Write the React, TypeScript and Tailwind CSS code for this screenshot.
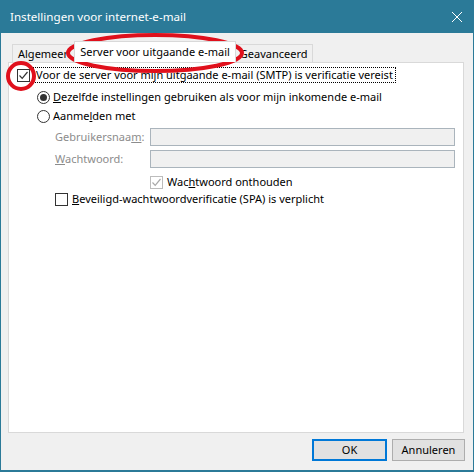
import React from "react";

const font = { fontFamily: '"Noto Sans", "Segoe UI", sans-serif' };

function Check({ checked, disabled }: { checked?: boolean; disabled?: boolean }) {
  return (
    <span
      className={`flex h-[13px] w-[13px] shrink-0 items-center justify-center border bg-white ${
        disabled ? "border-[#bcbcbc]" : "border-[#333333]"
      }`}
    >
      {checked && (
        <svg width="11" height="11" viewBox="0 0 11 11">
          <path d="M1.5 5.5 L4.2 8.3 L9.5 2" fill="none" stroke={disabled ? "#a8a8a8" : "#333333"} strokeWidth="1.2" />
        </svg>
      )}
    </span>
  );
}

function Radio({ checked }: { checked?: boolean }) {
  return (
    <span className="flex h-[13px] w-[13px] shrink-0 items-center justify-center rounded-full border border-[#333333] bg-white">
      {checked && <span className="h-[7px] w-[7px] rounded-full bg-[#333333]" />}
    </span>
  );
}

export default function App() {
  return (
    <div className="relative h-[473px] w-[475px] bg-white text-[11px] leading-[14px] text-black" style={font}>
      <div className="flex h-[472px] w-[474px] flex-col border-x border-b-2 border-[#2b7a98] bg-[#f0f0f0]">
        <div className="flex h-[33px] shrink-0 items-center justify-between bg-[#2b7a98] pl-[9px] pr-[10px] text-white">
          <span className="text-[11.6px]">Instellingen voor internet-e-mail</span>
          <svg width="12" height="12" viewBox="0 0 12 12">
            <path d="M1 1 L11 11 M11 1 L1 11" stroke="white" strokeWidth="1" />
          </svg>
        </div>

        <div className="flex flex-1 flex-col px-[7px] pt-[8px]">
          <div className="flex h-[21px] items-end pl-[4px]">
            <div className="flex h-[18px] items-center border border-b-0 border-[#d9d9d9] bg-[#f0f0f0] pl-[5px] pr-[4px]">Algemeen</div>
            <div className="-mx-[1px] z-10 flex h-[21px] items-center border border-b-0 border-[#d9d9d9] bg-white px-[5px]">
              Server voor uitgaande e-mail
            </div>
            <div className="flex h-[18px] items-center border border-b-0 border-[#d9d9d9] bg-[#f0f0f0] px-[4px]">Geavanceerd</div>
          </div>
          <div className="flex h-[371px] w-[456px] flex-col border border-[#d9d9d9] bg-white pl-[8px] pt-[4px]">
            <div className="flex h-[16px] items-center gap-[3px]">
              <Check checked />
              <span className="flex h-[16px] items-center border border-dotted border-black px-[2px]">
                Voor de server voor mijn uitgaande e-mail (SMTP) is verificatie vereist
              </span>
            </div>
            <div className="mt-[6px] flex h-[16px] items-center gap-[3px] pl-[20px]">
              <Radio checked />
              <span>
                <u>D</u>ezelfde instellingen gebruiken als voor mijn inkomende e-mail
              </span>
            </div>
            <div className="mt-[3px] flex h-[16px] items-center gap-[3px] pl-[20px]">
              <Radio />
              <span>
                Aanme<u>l</u>den met
              </span>
            </div>
            <div className="mt-[4px] flex h-[18px] items-center pl-[38px] text-[#8c8c8c]">
              <span className="w-[95px] shrink-0">
                Gebruikersnaa<u>m</u>:
              </span>
              <span className="h-[18px] w-[305px] border border-[#aab4bc] bg-[#f0f0f0]" />
            </div>
            <div className="mt-[4px] flex h-[18px] items-center pl-[38px] text-[#8c8c8c]">
              <span className="w-[95px] shrink-0">
                <u>W</u>achtwoord:
              </span>
              <span className="h-[18px] w-[305px] border border-[#aab4bc] bg-[#f0f0f0]" />
            </div>
            <div className="mt-[6px] flex h-[16px] items-center gap-[4px] pl-[133px]">
              <Check checked disabled />
              <span>
                Wac<u>h</u>twoord onthouden
              </span>
            </div>
            <div className="mt-[1px] flex h-[16px] items-center gap-[4px] pl-[38px]">
              <Check />
              <span>
                <u>B</u>eveiligd-wachtwoordverificatie (SPA) is verplicht
              </span>
            </div>
          </div>
          <div className="mt-[6px] flex justify-end gap-[5px] pr-[1px]">
            <button className="h-[22px] w-[75px] border-2 border-[#0078d7] bg-[#e1e1e1]">OK</button>
            <button className="h-[22px] w-[73px] border border-[#adadad] bg-[#e1e1e1]">Annuleren</button>
          </div>
        </div>
      </div>

      <svg className="pointer-events-none absolute left-0 top-0" width="475" height="473">
        <ellipse cx="155" cy="53" rx="87" ry="18" fill="none" stroke="#e0101c" strokeWidth="4" />
        <circle cx="21" cy="76" r="13" fill="none" stroke="#e0101c" strokeWidth="4" />
      </svg>
    </div>
  );
}
